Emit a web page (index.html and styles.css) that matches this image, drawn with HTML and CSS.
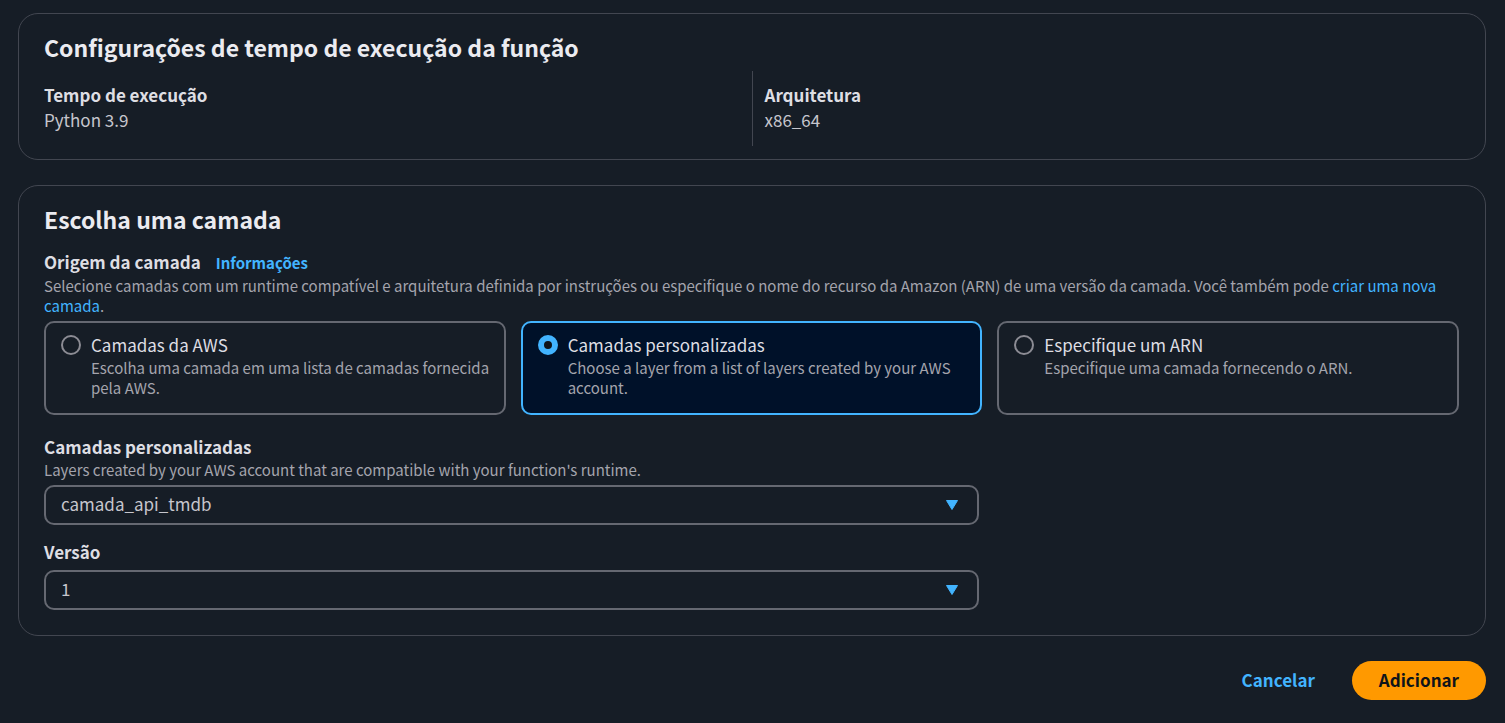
FILE: index.html
```html
<!DOCTYPE html>
<html lang="pt-BR">
<head>
<meta charset="utf-8">
<meta name="viewport" content="width=device-width, initial-scale=1">
<title>Adicionar camada</title>
<link rel="stylesheet" href="styles.css">
</head>
<body>
<main class="page">
  <section class="panel">
    <h2 class="panel-title">Configurações de tempo de execução da função</h2>
    <dl class="facts">
      <div class="fact">
        <dt class="label">Tempo de execução</dt>
        <dd class="fact-value">Python 3.9</dd>
      </div>
      <div class="fact">
        <dt class="label">Arquitetura</dt>
        <dd class="fact-value">x86_64</dd>
      </div>
    </dl>
  </section>

  <form class="form">
    <section class="panel">
      <h2 class="panel-title">Escolha uma camada</h2>
      <div class="fields">
        <div class="field" role="radiogroup" aria-labelledby="origin-label">
          <div class="label-row">
            <span class="label" id="origin-label">Origem da camada</span>
            <a class="link info" href="#">Informações</a>
          </div>
          <p class="hint">Selecione camadas com um runtime compatível e arquitetura definida por instruções ou especifique o nome do recurso da Amazon (ARN) de uma versão da camada. Você também pode <a class="link" href="#">criar uma nova camada</a>.</p>
          <div class="tiles">
            <label class="tile">
              <input class="radio" type="radio" name="origin">
              <span class="tile-text">
                <span class="tile-title">Camadas da AWS</span>
                <span class="hint">Escolha uma camada em uma lista de camadas fornecida pela AWS.</span>
              </span>
            </label>
            <label class="tile">
              <input class="radio" type="radio" name="origin" checked>
              <span class="tile-text">
                <span class="tile-title">Camadas personalizadas</span>
                <span class="hint">Choose a layer from a list of layers created by your AWS account.</span>
              </span>
            </label>
            <label class="tile">
              <input class="radio" type="radio" name="origin">
              <span class="tile-text">
                <span class="tile-title">Especifique um ARN</span>
                <span class="hint">Especifique uma camada fornecendo o ARN.</span>
              </span>
            </label>
          </div>
        </div>
        <div class="field narrow">
          <label class="label" for="layer">Camadas personalizadas</label>
          <p class="hint">Layers created by your AWS account that are compatible with your function's runtime.</p>
          <div class="select-box">
            <select class="select" id="layer"><option>camada_api_tmdb</option></select>
            <svg class="caret" viewBox="0 0 14 12" aria-hidden="true"><path d="M1.5 1.5h11L7 10.5z"/></svg>
          </div>
        </div>
        <div class="field narrow">
          <label class="label" for="version">Versão</label>
          <div class="select-box">
            <select class="select" id="version"><option>1</option></select>
            <svg class="caret" viewBox="0 0 14 12" aria-hidden="true"><path d="M1.5 1.5h11L7 10.5z"/></svg>
          </div>
        </div>
      </div>
    </section>
    <div class="actions">
      <button class="button" type="button">Cancelar</button>
      <button class="button primary" type="submit">Adicionar</button>
    </div>
  </form>
</main>
</body>
</html>
```
FILE: styles.css
```css
* {
  box-sizing: border-box;
}

body {
  margin: 0;
  background: #161d26;
  color: #c6c6cd;
  font: 17px/23px "Noto Sans CJK SC", "Noto Sans", sans-serif;
}

h2, p, dl, dd {
  margin: 0;
}

.page {
  padding: 13px 19px 23px 18px;
}

.page,
.form {
  display: flex;
  flex-direction: column;
  gap: 25px;
}

.panel {
  padding: 18px 26px 13px 25px;
  border: 1px solid #424650;
  border-radius: 20px;
}

.form .panel {
  padding-bottom: 25px;
}

.panel-title {
  color: #ebebf0;
  font-size: 23px;
  line-height: 30px;
  font-weight: 700;
}

.facts {
  display: grid;
  grid-template-columns: 1fr 1fr;
  margin-top: 9px;
}

.fact {
  padding: 12px 0 15px;
}

.fact + .fact {
  padding-left: 12px;
  border-left: 1px solid #424650;
}

.label {
  display: block;
  padding-bottom: 2px;
  color: #dedee3;
  font-weight: 700;
}

.fields {
  display: flex;
  flex-direction: column;
  gap: 15px;
  margin-top: 16px;
}

.field:first-child {
  margin-bottom: 5px;
}

.narrow {
  width: calc((100% + 25px) * 2 / 3 - 25px);
}

.label-row {
  display: flex;
  align-items: baseline;
  gap: 15px;
  padding-bottom: 1px;
}

.link {
  color: #42b4ff;
  text-decoration: none;
}

.info {
  font-size: 15px;
  line-height: 20px;
  font-weight: 700;
}

.hint {
  color: #a4a4ad;
  font-size: 15px;
  line-height: 20px;
}

.tiles {
  display: grid;
  grid-template-columns: repeat(3, 1fr);
  gap: 15px;
  margin-top: 5px;
}

.tile {
  display: flex;
  align-items: flex-start;
  gap: 10px;
  min-height: 94px;
  padding: 10px 10px 10px 15px;
  border: 2px solid #656871;
  border-radius: 10px;
}

.tile:has(:checked) {
  border-color: #42b4ff;
  background: #001129;
}

.radio {
  flex: none;
  appearance: none;
  width: 20px;
  height: 20px;
  margin: 2px 0 0;
  border: 2px solid #8c8c94;
  border-radius: 50%;
}

.radio:checked {
  border: 6px solid #42b4ff;
  background: #0f141a;
}

.tile-text {
  display: flex;
  flex-direction: column;
  gap: 2px;
}

.tile-title {
  color: #dedee3;
}

.select-box {
  display: grid;
  align-items: center;
  margin-top: 5px;
}

.select {
  grid-area: 1 / 1;
  appearance: none;
  width: 100%;
  height: 40px;
  padding: 0 45px 4px 15px;
  border: 2px solid #656871;
  border-radius: 10px;
  background: transparent;
  color: #c6c6cd;
  font: inherit;
}

.caret {
  grid-area: 1 / 1;
  justify-self: end;
  width: 14px;
  height: 12px;
  margin-right: 20px;
  fill: #42b4ff;
  stroke: #42b4ff;
  stroke-width: 1;
  stroke-linejoin: round;
  pointer-events: none;
}

.actions {
  display: flex;
  justify-content: flex-end;
  gap: 10px;
}

.button {
  height: 39px;
  padding: 0 27px 2px;
  border: 0;
  border-radius: 20px;
  background: transparent;
  color: #42b4ff;
  font: inherit;
  font-weight: 700;
}

.primary {
  background: #ff9900;
  color: #0f141a;
}
```
